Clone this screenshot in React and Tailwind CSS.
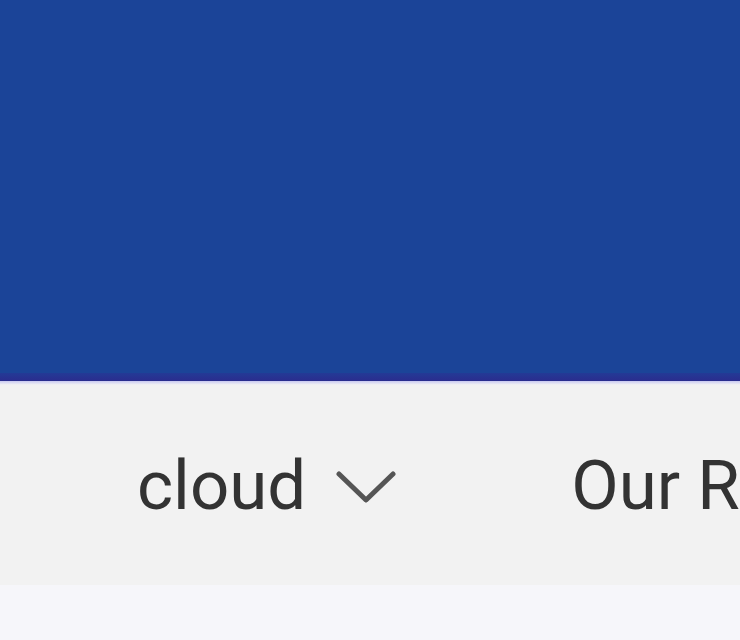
export default function App() {
  return (
    <div className="w-[740px] h-[640px] overflow-hidden bg-[#f6f6fa]" style={{ fontFamily: "Roboto, 'Liberation Sans', sans-serif" }}>
      <div className="h-[373px] bg-[#1b4498]" />
      <div className="h-[8px] bg-gradient-to-b from-[#233a96] to-[#2a2c8e]" />
      <div className="h-[4px] bg-gradient-to-b from-[#c9c9f0] to-[#f4f4f4]" />
      <nav className="h-[200px] bg-[#f2f2f2] flex items-center pl-[137px] whitespace-nowrap overflow-hidden">
        <div className="flex items-center gap-[30px] text-[#333333] text-[69px] leading-none">
          <span>cloud</span>
          <svg width="60" height="36" viewBox="0 0 60 36" className="mt-[4px]">
            <path d="M3 5 L30 31 L57 5" fill="none" stroke="#555555" strokeWidth="5" strokeLinecap="round" strokeLinejoin="round" />
          </svg>
        </div>
        <span className="ml-[175px] text-[#333333] text-[69px] leading-none">Our Resources</span>
      </nav>
      <div className="h-[55px] bg-[#f6f6fa]" />
    </div>
  );
}
